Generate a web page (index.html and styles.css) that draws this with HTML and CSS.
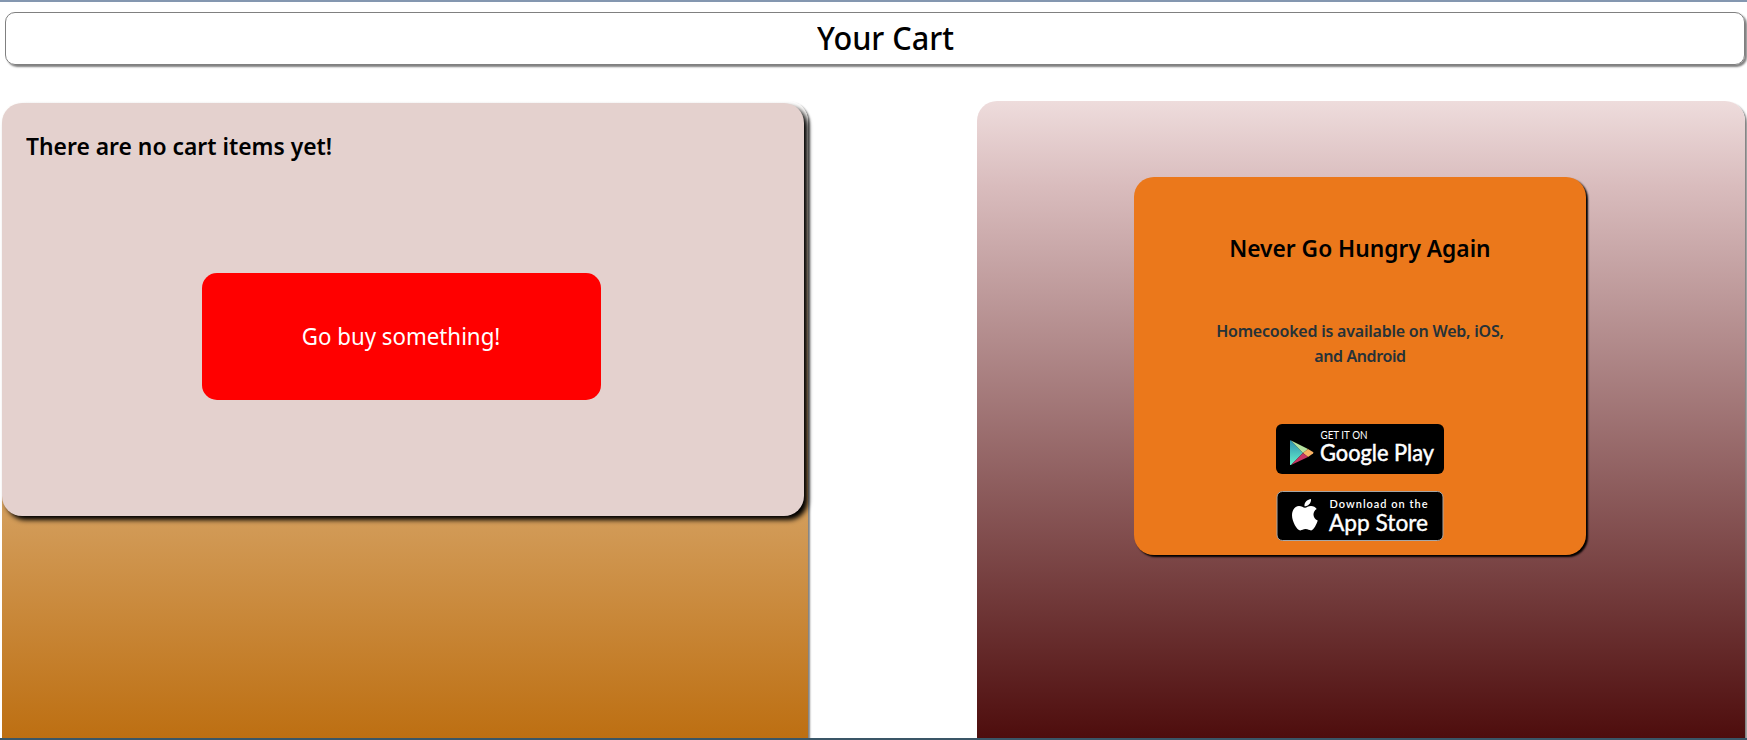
FILE: index.html
```html
<!DOCTYPE html>
<html lang="en">
<head>
<meta charset="utf-8">
<title>Your Cart</title>
<link rel="stylesheet" href="styles.css">
</head>
<body>
<header class="title-bar"><h1 class="title">Your Cart</h1></header>
<main class="columns">
  <section class="cart">
    <div class="cart-empty">
      <h2 class="empty-title">There are no cart items yet!</h2>
      <a class="buy"><span class="buy-label">Go buy something!</span></a>
    </div>
  </section>
  <aside class="promo">
    <div class="card">
      <h2 class="card-title">Never Go Hungry Again</h2>
      <p class="card-text"><span class="line-one">Homecooked is available on Web, iOS,</span><br><span class="line-two">and Android</span></p>
      <svg class="badge" width="168" height="50" viewBox="0 0 168 50">
        <defs>
          <linearGradient id="blue" x1="0" y1="0" x2="0" y2="1"><stop offset="0" stop-color="#2e8fae"/><stop offset="1" stop-color="#66f2cc"/></linearGradient>
        </defs>
        <rect width="168" height="50" rx="6"/>
        <path fill="url(#blue)" d="M14 17q0-1 1-.6L27 29 15 41q-1 .4-1-.6z"/>
        <path fill="#b5e3a0" d="M15 16.400L32 25l-5 4z"/>
        <path fill="#f8b163" d="M32 25l5 3q1 .8 0 1.600L32 33l-5-4z"/>
        <path fill="#c83663" d="M15 41l12-12 5 4z"/>
        <text class="g-small" x="44.500" y="14.500" textLength="47" lengthAdjust="spacingAndGlyphs">GET IT ON</text>
        <text class="g-big" x="44" y="37" textLength="114" lengthAdjust="spacingAndGlyphs">Google Play</text>
      </svg>
      <svg class="badge" width="168" height="50" viewBox="0 0 168 50">
        <rect x="1" y=".5" width="166" height="49" rx="5.500" stroke="#a6a6a6"/>
        <path fill="#fff" d="M35 8c.5 4-3 7.500-6.500 7.300C28 11.500 31.500 8.300 35 8zM29 16.800c1.500 0 3.300-1.700 6-1.700 2.400 0 4.500 1.200 5.700 3-4.700 2.800-4.200 9.300 1 11.500-1 3.400-3.900 9.800-6.600 9.800-2.100 0-2.900-1.300-5.500-1.300-2.500 0-3.500 1.300-5.300 1.300-3.300 0-8.300-9-8.300-15.200 0-5.500 3.400-9.100 7-9.100 2.500 0 4.300 1.700 6 1.700z"/>
        <text class="a-small" x="53.500" y="16.500" textLength="98">Download on the</text>
        <text class="a-big" x="53" y="39.500" textLength="99" lengthAdjust="spacingAndGlyphs">App Store</text>
      </svg>
    </div>
  </aside>
</main>
</body>
</html>
```
FILE: styles.css
```css
* { box-sizing: border-box; }
body {
  margin: 0;
  height: 740px;
  overflow: hidden;
  display: flex;
  flex-direction: column;
  background: #fff;
  border-top: 2px solid #8497b0;
  border-bottom: 2px solid #3a5667;
  font-family: "Noto Sans", sans-serif;
  color: #000;
}
h1, h2, p { margin: 0; }
.title-bar {
  flex: none;
  height: 53px;
  margin: 10px 2px 0 5px;
  padding: 0 0 1px 20px;
  border: 1px solid gray;
  border-radius: 10px;
  box-shadow: 2px 2px 2px gray;
  display: flex;
  justify-content: center;
  align-items: center;
}
.title { font-size: 32px; line-height: 40px; font-weight: 500; transform: scaleX(.957); }
.columns {
  flex: 1;
  margin-top: 36px;
  padding: 0 2px;
  display: flex;
  justify-content: space-between;
}
.cart {
  width: 806px;
  height: 659px;
  padding-top: 2px;
  border-radius: 20px;
  box-shadow: 2px 2px 2px gray;
  background: linear-gradient(#fff 0, #d49f5e 400px, #bd6f12 637px);
}
.cart-empty {
  width: 802px;
  height: 413px;
  padding: 23px 24px 0;
  border-radius: 20px;
  background: #e4d1ce;
  box-shadow: 4px 4px 5px #000;
  display: flex;
  flex-direction: column;
}
.empty-title { font-size: 24px; line-height: 40px; font-weight: 600; transform: scaleX(.952); transform-origin: 0 50%; }
.buy {
  align-self: center;
  width: 399px;
  height: 127px;
  margin: 107px 4px 0 0;
  padding-bottom: 2px;
  border-radius: 15px;
  background: #f00;
  color: #fff;
  font-size: 24px;
  display: flex;
  justify-content: center;
  align-items: center;
}
.buy-label { transform: scaleX(.928); }
.promo {
  width: 768px;
  height: 659px;
  padding-top: 76px;
  border-radius: 20px;
  box-shadow: 2px 2px 2px gray;
  background: linear-gradient(#eedcdc 0, #d9bcbd 85px, #4e0d0d 637px);
}
.card {
  width: 452px;
  height: 378px;
  margin-left: 157px;
  padding-top: 51px;
  border-radius: 20px;
  background: #eb781b;
  box-shadow: 2px 2px 2px #000;
  display: flex;
  flex-direction: column;
  align-items: center;
}
.card-title { font-size: 24px; line-height: 40px; font-weight: 600; transform: scaleX(.948); }
.card-text {
  margin-top: 51px;
  font-size: 16px;
  line-height: 25px;
  font-weight: 600;
  color: #263238;
  text-align: center;
}
.line-one { letter-spacing: -.22px; }
.line-two { letter-spacing: -.4px; }
.badge { flex: none; margin-top: 55px; }
.badge + .badge { margin-top: 17px; }
text { fill: #fff; }
.g-small { font: 10.500px Lato, sans-serif; }
.g-big { font: 22.500px Lato, sans-serif; stroke: #fff; stroke-width: .5px; }
.a-small { font: 600 11px Lato, sans-serif; }
.a-big { font: 22.500px Lato, sans-serif; stroke: #fff; stroke-width: .4px; }
```
